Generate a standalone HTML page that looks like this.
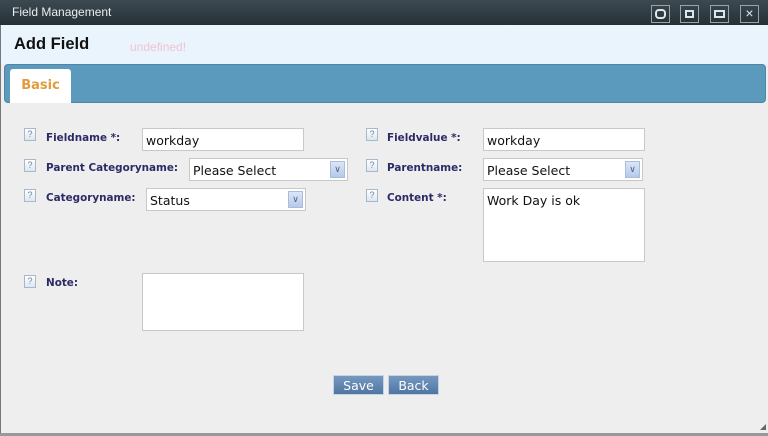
<!DOCTYPE html>
<html><head><meta charset="utf-8"><style>
*{margin:0;padding:0;box-sizing:border-box}
body{width:768px;height:436px;overflow:hidden;background:#eeeeee;font-family:"DejaVu Sans","Liberation Sans",sans-serif;position:relative}
.a{position:absolute}
#title{left:0;top:0;width:768px;height:25px;background:linear-gradient(#3e4a52,#253036);color:#e8eef2;font:12px "Liberation Sans",sans-serif;padding:5px 0 0 12px}
.tb{top:5px;width:19px;height:18px;border:1px solid #9aa3a8;}
#hdr{left:1px;top:25px;width:767px;height:39px;background:#eaf4fd}
#tabbar{left:4px;top:64px;width:762px;height:39px;background:#5b99bd;border:1px solid #4d86a8;border-radius:4px}
#tab{left:10px;top:69px;width:61px;height:34px;background:#fff;border-radius:3px 3px 0 0;color:#e09c3c;font:bold 13px "DejaVu Sans",sans-serif;text-align:center;padding-top:9px}
.ic{width:12px;height:13px;border:1px solid #a5b8cc;background:linear-gradient(#fff,#dde6ef);font:9px sans-serif;color:#6a86a8;text-align:center;line-height:11px}
.lb{font:bold 10.4px "DejaVu Sans",sans-serif;color:#2c2a66;white-space:nowrap}
.in{background:#fff;border:1px solid #c8c8c8;font:12.5px "DejaVu Sans",sans-serif;color:#111;padding:4px 0 0 3px}
.sel .ar{position:absolute;right:2px;top:2px;width:15px;height:17px;background:linear-gradient(#dbe6f6,#b6c9ea);border:1px solid #aabbdd;color:#4a5f8a;font-size:9px;text-align:center;line-height:16px}
.btn{top:375px;height:20px;background:linear-gradient(#7598c0,#4f76a3);border:1px solid #c6d4e2;color:#fff;font:12.5px "DejaVu Sans",sans-serif;text-align:center;padding-top:2px}
</style></head><body>
<div class="a" style="left:0;top:0;width:1px;height:436px;background:#777"></div>
<div class="a" style="left:0;top:433px;width:768px;height:3px;background:#999"></div>
<div id="title" class="a">Field Management</div>
<div class="a tb" style="left:651px"><div class="a" style="left:3px;top:3px;width:11px;height:10px;border:2px solid #dfe5e8;border-radius:4px"></div></div>
<div class="a tb" style="left:680px"><div class="a" style="left:4px;top:4px;width:9px;height:8px;border:2px solid #dfe5e8"></div></div>
<div class="a tb" style="left:710px"><div class="a" style="left:3px;top:4px;width:11px;height:8px;border:2px solid #dfe5e8"></div></div>
<div class="a tb" style="left:740px;color:#dfe5e8;font:14px sans-serif;text-align:center;line-height:15px">×</div>
<div id="hdr" class="a"></div>
<div class="a" style="left:14px;top:35px;font:bold 16.5px 'Liberation Sans',sans-serif;color:#111">Add Field</div>
<div class="a" style="left:130px;top:40px;font:12px 'Liberation Sans',sans-serif;color:#f2c2d0">undefined!</div>
<div id="tabbar" class="a"></div>
<div id="tab" class="a">Basic</div>

<div class="a ic" style="left:24px;top:128px">?</div><div class="a lb" style="left:46px;top:132px">Fieldname *:</div>
<div class="a in" style="left:142px;top:128px;width:162px;height:23px">workday</div>
<div class="a ic" style="left:24px;top:159px">?</div><div class="a lb" style="left:46px;top:162px">Parent Categoryname:</div>
<div class="a in sel" style="left:189px;top:158px;width:159px;height:23px">Please Select<div class="ar">&#8744;</div></div>
<div class="a ic" style="left:24px;top:189px">?</div><div class="a lb" style="left:46px;top:192px">Categoryname:</div>
<div class="a in sel" style="left:146px;top:188px;width:160px;height:23px">Status<div class="ar">&#8744;</div></div>
<div class="a ic" style="left:24px;top:275px">?</div><div class="a lb" style="left:46px;top:277px">Note:</div>
<div class="a in" style="left:142px;top:273px;width:162px;height:58px"></div>

<div class="a ic" style="left:366px;top:128px">?</div><div class="a lb" style="left:387px;top:132px">Fieldvalue *:</div>
<div class="a in" style="left:483px;top:128px;width:162px;height:23px">workday</div>
<div class="a ic" style="left:366px;top:159px">?</div><div class="a lb" style="left:387px;top:162px">Parentname:</div>
<div class="a in sel" style="left:483px;top:158px;width:160px;height:23px">Please Select<div class="ar">&#8744;</div></div>
<div class="a ic" style="left:366px;top:189px">?</div><div class="a lb" style="left:387px;top:192px">Content *:</div>
<div class="a in" style="left:483px;top:188px;width:162px;height:74px">Work Day is ok</div>

<div class="a btn" style="left:333px;width:51px">Save</div>
<div class="a btn" style="left:388px;width:51px">Back</div>
<div class="a" style="left:760px;top:424px;width:0;height:0;border-left:6px solid transparent;border-bottom:6px solid #666"></div>
</body></html>
